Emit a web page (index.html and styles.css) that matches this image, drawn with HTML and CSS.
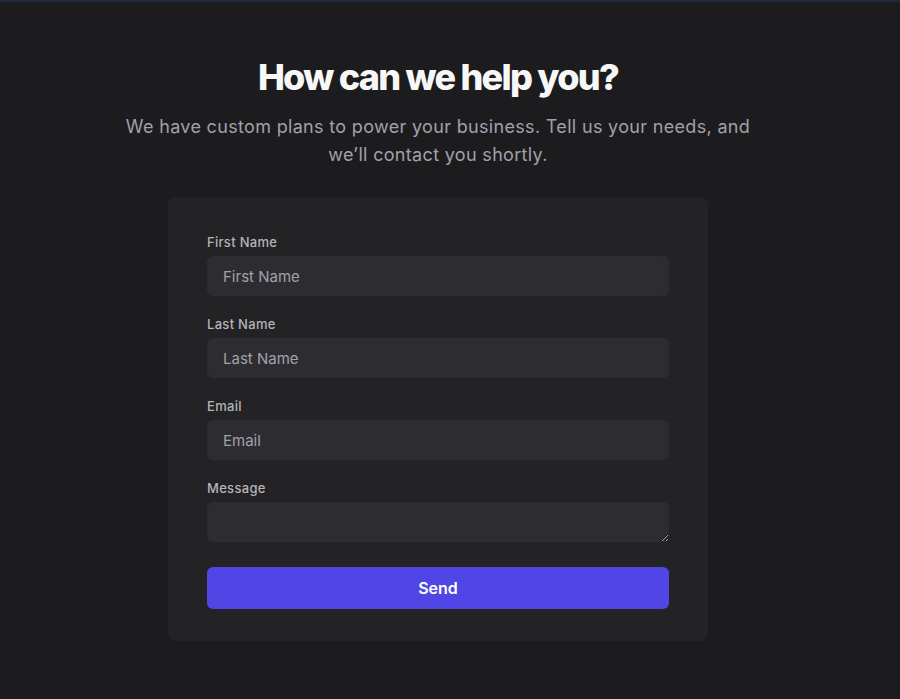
FILE: index.html
```html
<!DOCTYPE html>
<html lang="en">
<head>
<meta charset="utf-8">
<title>Contact</title>
<link rel="stylesheet" href="styles.css">
</head>
<body>
<main class="page">
  <h1 class="title">How can we help you?</h1>
  <p class="subtitle">We have custom plans to power your business. Tell us your needs, and we’ll contact you shortly.</p>
  <form class="card">
    <div class="field">
      <label class="label" for="fn">First Name</label>
      <input class="input" id="fn" type="text" placeholder="First Name">
    </div>
    <div class="field">
      <label class="label" for="ln">Last Name</label>
      <input class="input" id="ln" type="text" placeholder="Last Name">
    </div>
    <div class="field">
      <label class="label" for="em">Email</label>
      <input class="input" id="em" type="email" placeholder="Email">
    </div>
    <div class="field">
      <label class="label" for="msg">Message</label>
      <textarea class="input textarea" id="msg" rows="1"></textarea>
    </div>
    <button class="button" type="button">Send</button>
  </form>
</main>
</body>
</html>
```
FILE: styles.css
```css
* { box-sizing: border-box; }
html, body { margin: 0; padding: 0; }
body {
  background: #1c1c1e;
  border-top: 2px solid #1f2a3c;
  font-family: Inter, "Noto Sans", sans-serif;
  color: #f4f4f5;
  min-height: 699px;
}
.page {
  width: 876px;
  display: flex;
  flex-direction: column;
  align-items: center;
  padding-top: 55px;
}
.title {
  margin: 0;
  font-size: 36px;
  line-height: 40px;
  font-weight: 800;
  letter-spacing: -0.048em;
  color: #f7f7f8;
}
.subtitle {
  margin: 16px 0 0;
  width: 650px;
  text-align: center;
  font-size: 18px;
  line-height: 28px;
  letter-spacing: 0.018em;
  color: #a1a1aa;
}
.card {
  margin-top: 28px;
  width: 540px;
  background: #232325;
  border-radius: 8px;
  padding: 35px 39px 32px;
  display: flex;
  flex-direction: column;
}
.field {
  display: flex;
  flex-direction: column;
  gap: 4px;
  margin-bottom: 18px;
}
.field:last-of-type { margin-bottom: 25px; }
.label {
  font-size: 13px;
  line-height: 20px;
  font-weight: 500;
  letter-spacing: 0.3px;
  color: #b4b4b9;
}
.input {
  height: 40px;
  width: 100%;
  border: none;
  outline: none;
  border-radius: 6px;
  background: #2d2d31;
  padding: 0 16px;
  font-family: inherit;
  font-size: 15px;
  color: #e4e4e7;
}
.input::placeholder { color: #a1a1aa; }
.textarea {
  display: block;
  resize: vertical;
  padding: 8px 16px;
}
.button {
  height: 42px;
  border: none;
  border-radius: 6px;
  background: #4f46e5;
  color: #ffffff;
  font-family: inherit;
  font-size: 16px;
  font-weight: 600;
  cursor: pointer;
}
```
